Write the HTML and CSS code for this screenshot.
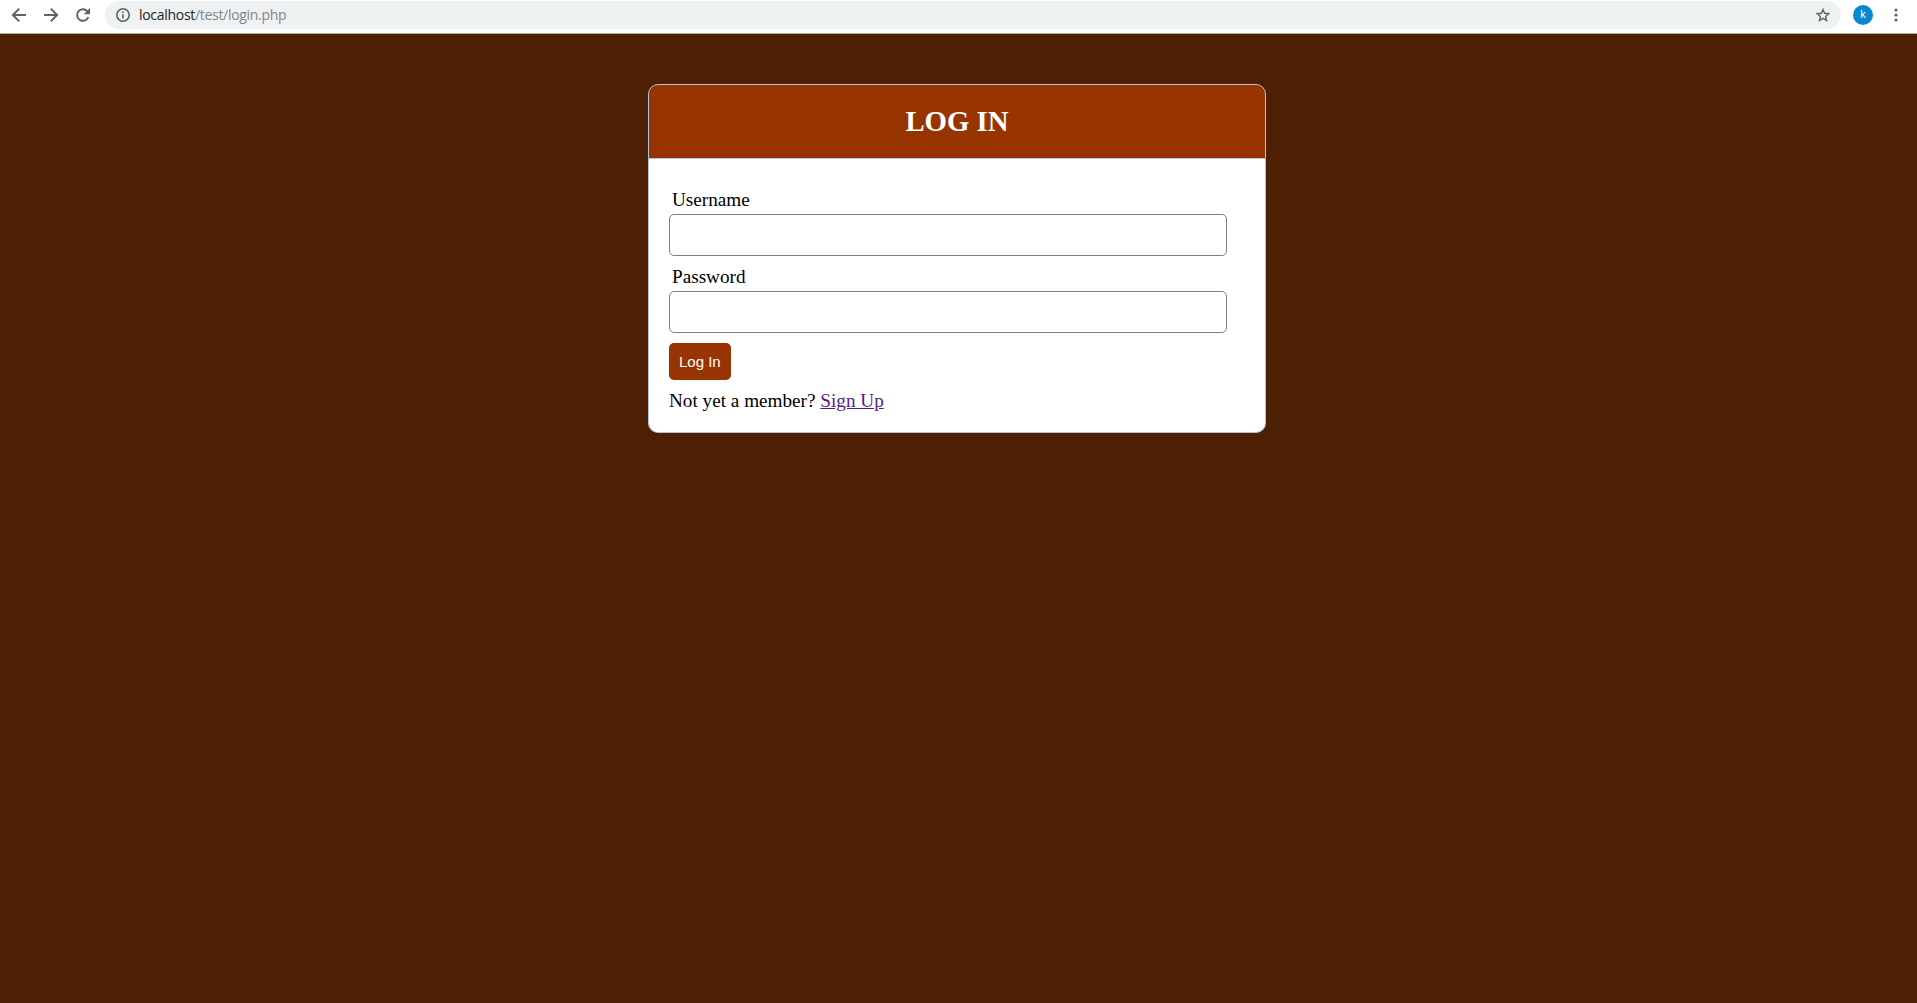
FILE: index.html
```html
<!DOCTYPE html>
<html lang="en">
<head>
<meta charset="utf-8">
<title>Log In</title>
<link rel="stylesheet" href="styles.css">
</head>
<body>
<header class="toolbar">
  <svg class="nav" width="16" height="16" viewBox="0 0 16 16"><path d="M15 8H2.6M8.2 1.6L1.9 8l6.3 6.4"/></svg>
  <svg class="nav" width="16" height="16" viewBox="0 0 16 16"><path d="M1 8h12.4M7.8 1.6L14.1 8l-6.3 6.4"/></svg>
  <svg class="nav" width="16" height="16" viewBox="0 0 16 16"><path d="M13.4 10A5.8 5.8 0 1 1 12.2 4"/><path class="solid" d="M15 1v6.2H8.8z"/></svg>
  <div class="address">
    <svg class="info" width="14" height="14" viewBox="0 0 14 14"><circle cx="7" cy="7" r="6.2"/><path d="M7 6.2v4.3M7 3.5v1.6"/></svg>
    <span class="url"><span class="host">localhost</span>/test/login.php</span>
    <svg class="star" width="14" height="14" viewBox="0 0 14 14"><path d="M7 1.5l1.6 3.8 4.2.4-3.2 2.7 1 4.1L7 10.3l-3.6 2.2 1-4.1L1.2 5.7l4.2-.4z"/></svg>
  </div>
  <span class="avatar">k</span>
  <svg class="menu" width="4" height="14" viewBox="0 0 4 14"><circle cx="2" cy="2" r="1.6"/><circle cx="2" cy="7" r="1.6"/><circle cx="2" cy="12" r="1.6"/></svg>
</header>
<main class="page">
  <div class="card-header"><h2>LOG IN</h2></div>
  <form class="card-body">
    <div class="field">
      <label for="username">Username</label>
      <input id="username" type="text">
    </div>
    <div class="field">
      <label for="password">Password</label>
      <input id="password" type="password">
    </div>
    <button class="btn" type="button">Log In</button>
    <p class="signup">Not yet a member? <a href="#">Sign Up</a></p>
  </form>
</main>
</body>
</html>
```
FILE: styles.css
```css
* {
  box-sizing: border-box;
  margin: 0;
  padding: 0;
}

body {
  min-height: 100vh;
  background: #4d1f03;
  font-family: "Liberation Serif", "Times New Roman", serif;
  font-size: 19.2px;
  color: #000;
}

.toolbar {
  display: flex;
  align-items: center;
  height: 34px;
  padding: 0 19px 3px 11px;
  border-bottom: 1px solid #a9a9a4;
  background: #fff;
}

.nav {
  flex: none;
  margin-right: 16px;
  fill: none;
  stroke: #5f6368;
  stroke-width: 2;
}

.nav .solid {
  fill: #5f6368;
  stroke: none;
}

.address {
  display: flex;
  flex: 1;
  align-items: center;
  height: 28px;
  margin-left: -2px;
  padding: 0 11px;
  border-radius: 14px;
  background: #eff2f3;
}

.info {
  fill: none;
  stroke: #5f6368;
  stroke-width: 1.6;
}

.url {
  flex: 1;
  margin-left: 9px;
  font: 14px/20px "Open Sans", sans-serif;
  letter-spacing: -0.3px;
  color: #80868b;
}

.host {
  color: #202124;
}

.star {
  fill: none;
  stroke: #5f6368;
  stroke-width: 1.4;
}

.avatar {
  width: 20px;
  height: 20px;
  margin: 0 21px 0 12px;
  border-radius: 50%;
  background: #0a88d1;
  color: #fff;
  font: 11px/20px Roboto, sans-serif;
  text-align: center;
}

.menu {
  fill: #5f6368;
}

.page {
  width: 618px;
  margin: 50px 0 0 648px;
}

.card-header {
  padding: 20px;
  border: 1px solid #b0c4de;
  border-radius: 10px 10px 0 0;
  background: #973402;
  color: #fff;
  text-align: center;
}

.card-header h2 {
  font-size: 28.8px;
  line-height: 33px;
}

.card-body {
  height: 274px;
  padding: 20px;
  border: 1px solid #b0c4de;
  border-top: 0;
  border-radius: 0 0 10px 10px;
  background: #fff;
}

.field {
  margin: 10px 0;
}

.field label {
  display: block;
  margin: 3px;
  line-height: 22px;
}

.field input {
  display: block;
  width: 558px;
  height: 42px;
  padding: 5px 10px;
  border: 1px solid #808080;
  border-radius: 5px;
  background: #fff;
  font-size: 16px;
}

.btn {
  display: block;
  height: 37px;
  padding: 0 10px;
  border: 0;
  border-radius: 5px;
  background: #973402;
  color: #fff;
  font: 15px/37px "Liberation Sans", Arial, sans-serif;
}

.signup {
  margin-top: 10px;
  line-height: 22px;
}

.signup a {
  color: #551a8b;
}
```
